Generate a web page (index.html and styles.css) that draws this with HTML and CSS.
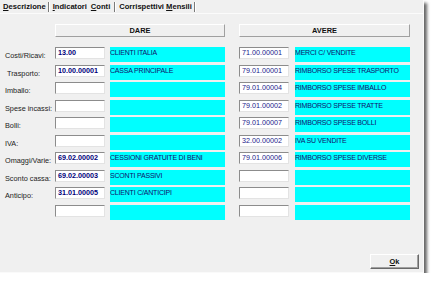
FILE: index.html
```html
<!DOCTYPE html>
<html>
<head>
<meta charset="utf-8">
<link rel="stylesheet" href="styles.css">
</head>
<body>
<div class="window">
  <div class="tabs">
    <span class="tab sep"><u>D</u>escrizione</span>
    <span class="tab"><u>I</u>ndicatori</span>
    <span class="tab active sep"><u>C</u>onti</span>
    <span class="tab sep">Corrispettivi <u>M</u>ensili</span>
  </div>
  <div class="panel">
    <div class="grid">
      <div class="lbl"></div>
      <div class="head">DARE</div>
      <div class="head">AVERE</div>
    </div>
    <div class="grid rows">
      <div class="lbl">Costi/Ricavi:</div>
      <div class="pair"><span class="code l">13.00</span><span class="desc">CLIENTI ITALIA</span></div>
      <div class="pair r"><span class="code">71.00.00001</span><span class="desc">MERCI C/ VENDITE</span></div>

      <div class="lbl ind">Trasporto:</div>
      <div class="pair"><span class="code l">10.00.00001</span><span class="desc">CASSA PRINCIPALE</span></div>
      <div class="pair r"><span class="code">79.01.00001</span><span class="desc">RIMBORSO SPESE TRASPORTO</span></div>

      <div class="lbl">Imballo:</div>
      <div class="pair"><span class="code l"></span><span class="desc"></span></div>
      <div class="pair r"><span class="code">79.01.00004</span><span class="desc">RIMBORSO SPESE IMBALLO</span></div>

      <div class="lbl">Spese incassi:</div>
      <div class="pair"><span class="code l"></span><span class="desc"></span></div>
      <div class="pair r"><span class="code">79.01.00002</span><span class="desc">RIMBORSO SPESE TRATTE</span></div>

      <div class="lbl">Bolli:</div>
      <div class="pair"><span class="code l"></span><span class="desc"></span></div>
      <div class="pair r"><span class="code">79.01.00007</span><span class="desc">RIMBORSO SPESE BOLLI</span></div>

      <div class="lbl">IVA:</div>
      <div class="pair"><span class="code l"></span><span class="desc"></span></div>
      <div class="pair r"><span class="code">32.00.00002</span><span class="desc">IVA SU VENDITE</span></div>

      <div class="lbl">Omaggi/Varie:</div>
      <div class="pair"><span class="code l">69.02.00002</span><span class="desc">CESSIONI GRATUITE DI BENI</span></div>
      <div class="pair r"><span class="code">79.01.00006</span><span class="desc">RIMBORSO SPESE DIVERSE</span></div>

      <div class="lbl">Sconto cassa:</div>
      <div class="pair"><span class="code l">69.02.00003</span><span class="desc">SCONTI PASSIVI</span></div>
      <div class="pair r"><span class="code"></span><span class="desc"></span></div>

      <div class="lbl">Anticipo:</div>
      <div class="pair"><span class="code l">31.01.00005</span><span class="desc">CLIENTI C/ANTICIPI</span></div>
      <div class="pair r"><span class="code"></span><span class="desc"></span></div>

      <div class="lbl"></div>
      <div class="pair"><span class="code l"></span><span class="desc"></span></div>
      <div class="pair r"><span class="code"></span><span class="desc"></span></div>
    </div>
    <div class="footer">
      <button class="ok"><u>O</u>k</button>
    </div>
  </div>
</div>
</body>
</html>
```

FILE: styles.css
```css
html, body {
  margin: 0;
  padding: 0;
  background: #ffffff;
}
body {
  font-family: "Liberation Sans", Arial, sans-serif;
  color: #1a1a1a;
}
.window {
  width: 424px;
  height: 273px;
  background: #f0f0f0;
  border-right: 1px solid #fafafa;
  border-bottom: 1px solid #fafafa;
  box-shadow: 3px 3px 3px rgba(0, 0, 0, 0.6);
  box-sizing: border-box;
  display: flex;
  flex-direction: column;
}
.tabs {
  display: flex;
  height: 13px;
  align-items: center;
  padding-left: 1px;
  border-bottom: 1px solid #fbfbfb;
}
.tab {
  font-size: 7.6px;
  font-weight: bold;
  color: #111;
  padding: 0 2px 0 2px;
  line-height: 10px;
  white-space: nowrap;
}
.tab.sep {
  border-right: 1px solid #7a7a7a;
  box-shadow: 1px 0 0 #ffffff;
  margin-right: 2px;
}
.tab.active {
  padding: 0 4px 0 2px;
}
.tab u {
  text-decoration-thickness: 1px;
}
.panel {
  flex: 1;
  display: flex;
  flex-direction: column;
  padding: 10px 0 0 5px;
}
.grid {
  display: grid;
  grid-template-columns: 36px 170px 171px;
  column-gap: 14px;
}
.head {
  height: 13px;
  box-sizing: border-box;
  border-top: 1px solid #ffffff;
  border-left: 1px solid #ffffff;
  border-right: 1px solid #a0a0a0;
  border-bottom: 1px solid #a0a0a0;
  font-size: 7.4px;
  font-weight: bold;
  color: #111;
  display: flex;
  align-items: center;
  justify-content: center;
}
.rows {
  margin-top: 10px;
  grid-auto-rows: 17.5px;
}
.lbl {
  font-size: 7.3px;
  color: #222;
  padding-top: 4px;
  white-space: nowrap;
}
.lbl.ind {
  padding-left: 2px;
}
.pair {
  display: flex;
  align-items: flex-start;
  gap: 5px;
}
.pair.r {
  gap: 6px;
}
.code {
  width: 50px;
  height: 12px;
  box-sizing: border-box;
  background: #ffffff;
  border-top: 1px solid #8c8c8c;
  border-left: 1px solid #8c8c8c;
  border-right: 1px solid #e3e3e3;
  border-bottom: 1px solid #e3e3e3;
  font-size: 7.2px;
  line-height: 10px;
  padding-left: 2px;
  color: #20208c;
  white-space: nowrap;
}
.code.l {
  font-weight: bold;
  color: #00007a;
}
.desc {
  width: 115px;
  height: 15px;
  box-sizing: border-box;
  background: #00ffff;
  font-size: 7px;
  letter-spacing: -0.2px;
  color: #10106a;
  line-height: 9px;
  padding-top: 1px;
  white-space: nowrap;
}
.footer {
  flex: 1;
  display: flex;
  justify-content: flex-end;
  align-items: flex-end;
  padding: 0 4px 3px 0;
}
.ok {
  width: 49px;
  height: 15px;
  box-sizing: border-box;
  background: #f0f0f0;
  border-top: 1px solid #ffffff;
  border-left: 1px solid #ffffff;
  border-right: 1px solid #696969;
  border-bottom: 1px solid #696969;
  box-shadow: inset -1px -1px 0 #a0a0a0;
  font-family: "Liberation Sans", Arial, sans-serif;
  font-size: 7.4px;
  font-weight: bold;
  color: #111;
  padding: 0;
}
```
